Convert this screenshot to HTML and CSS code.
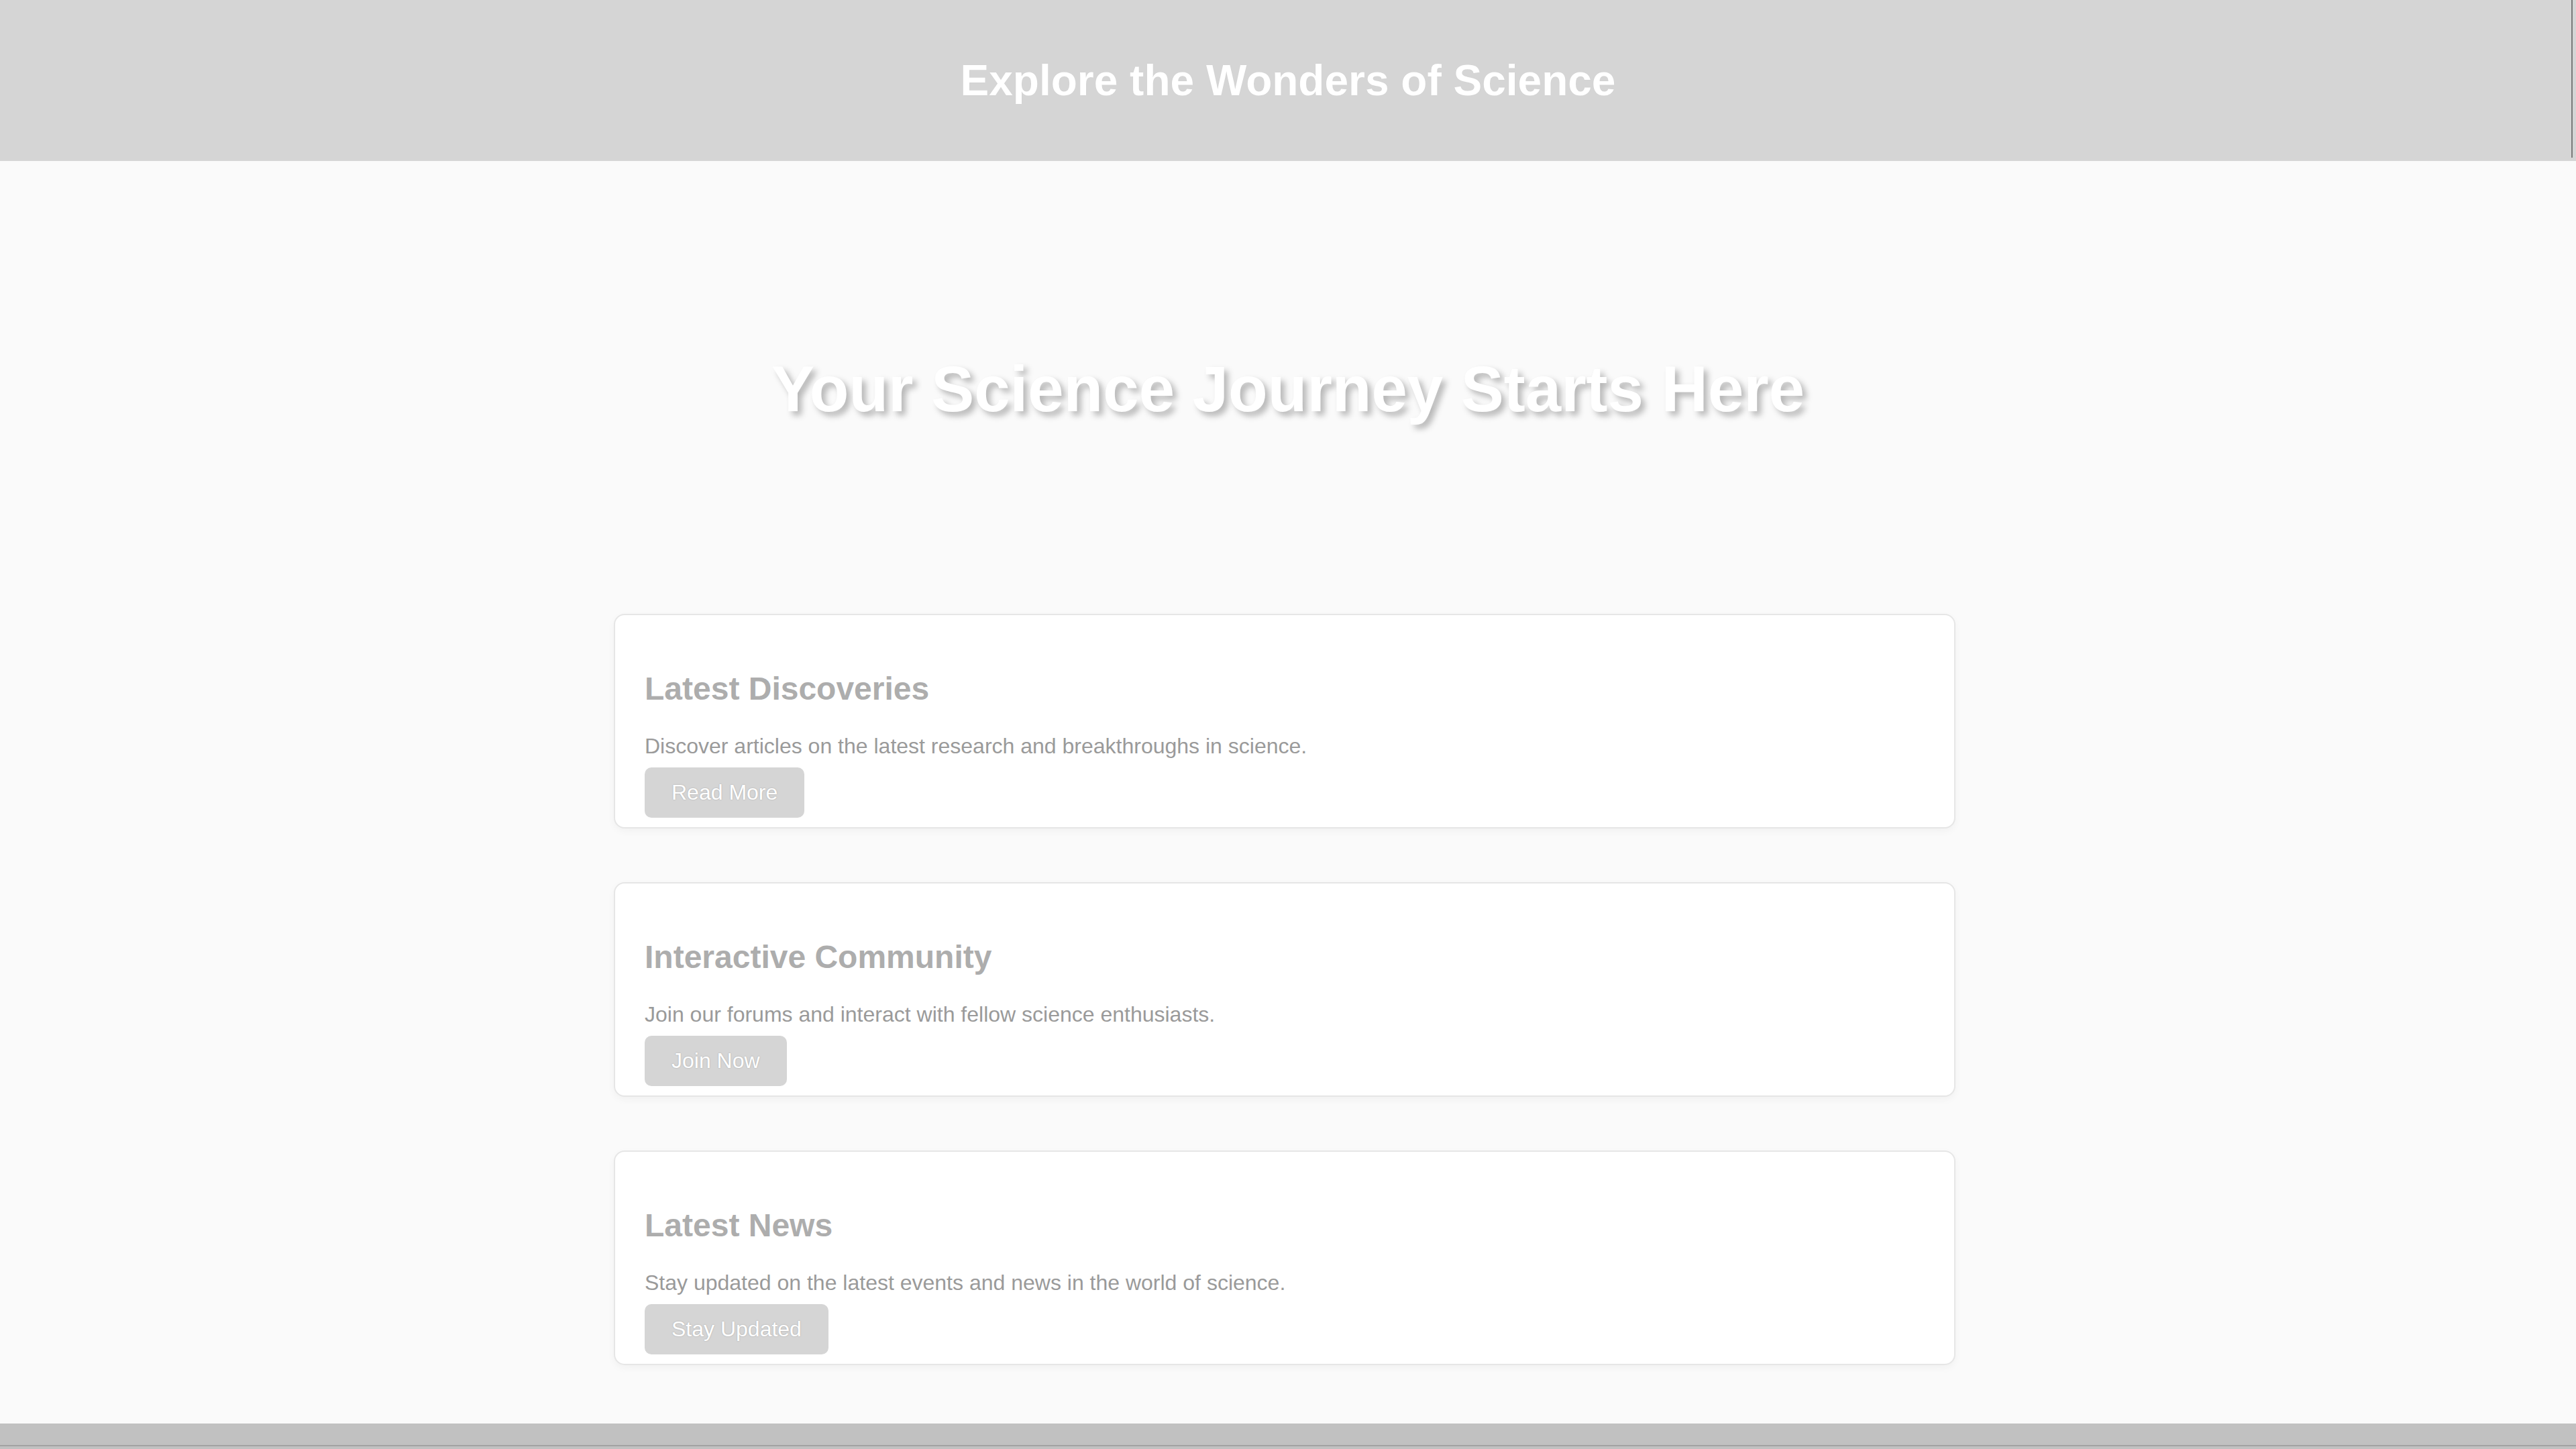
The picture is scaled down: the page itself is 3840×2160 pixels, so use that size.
FILE: index.html
```html
<!DOCTYPE html>
<html lang="en">
<head>
<meta charset="utf-8">
<title>Explore the Wonders of Science</title>
<link rel="stylesheet" href="styles.css">
</head>
<body>
<header class="site-header">
  <h1 class="site-title">Explore the Wonders of Science</h1>
</header>
<section class="hero">
  <h2 class="hero-title">Your Science Journey Starts Here</h2>
</section>
<main class="features">
  <article class="card">
    <h2 class="card-title">Latest Discoveries</h2>
    <p class="card-text">Discover articles on the latest research and breakthroughs in science.</p>
    <button class="card-btn">Read More</button>
  </article>
  <article class="card">
    <h2 class="card-title">Interactive Community</h2>
    <p class="card-text">Join our forums and interact with fellow science enthusiasts.</p>
    <button class="card-btn">Join Now</button>
  </article>
  <article class="card">
    <h2 class="card-title">Latest News</h2>
    <p class="card-text">Stay updated on the latest events and news in the world of science.</p>
    <button class="card-btn">Stay Updated</button>
  </article>
</main>
<footer class="site-footer">
  <div class="footer-rule"></div>
</footer>
</body>
</html>
```
FILE: styles.css
```css
html, body {
  margin: 0;
  padding: 0;
}
body {
  background: #fafafa;
  font-family: "Liberation Sans", Arial, sans-serif;
  color: #999;
}
.site-header {
  position: relative;
  background: #d5d5d5;
  height: 240px;
  display: flex;
  align-items: center;
  justify-content: center;
}
.site-header::after {
  content: "";
  position: absolute;
  top: 0;
  right: 5px;
  width: 2px;
  height: 235px;
  background: #7a7a7a;
}
.site-title {
  margin: 0;
  color: #ffffff;
  font-size: 64px;
  font-weight: bold;
  text-shadow: 0 0 1px rgba(0, 0, 0, 0.08);
}
.hero {
  padding: 205px 40px 185px;
  text-align: center;
}
.hero-title {
  margin: 80px 0;
  font-size: 96px;
  font-weight: bold;
  color: #ffffff;
  text-shadow: 6px 6px 10px rgba(0, 0, 0, 0.28);
}
.features {
  display: flex;
  flex-direction: column;
  align-items: center;
  gap: 80px;
  padding: 15px 10px 87px 0;
}
.card {
  box-sizing: border-box;
  width: 2000px;
  height: 320px;
  padding: 40px 44px;
  background: #ffffff;
  border: 2px solid #e6e6e6;
  border-radius: 16px;
  box-shadow: 0 4px 12px rgba(0, 0, 0, 0.04);
}
.card-title {
  margin: 42px 0 40px;
  font-size: 48px;
  font-weight: bold;
  color: #adadad;
}
.card-text {
  margin: 0 0 13px;
  font-size: 32px;
  color: #9a9a9a;
  text-shadow: 1px 1px 1px rgba(255, 255, 255, 0.8);
}
.card-btn {
  display: block;
  height: 75px;
  padding: 0 40px;
  border: none;
  border-radius: 10px;
  background: #d5d5d5;
  color: #ffffff;
  font-family: "Liberation Sans", Arial, sans-serif;
  font-size: 32px;
  text-shadow: 0 0 2px rgba(0, 0, 0, 0.25);
}
.site-footer {
  background: #c1c1c1;
  height: 60px;
  padding-top: 32px;
  box-sizing: border-box;
}
.footer-rule {
  height: 2px;
  background: #a2a2a2;
}
```
